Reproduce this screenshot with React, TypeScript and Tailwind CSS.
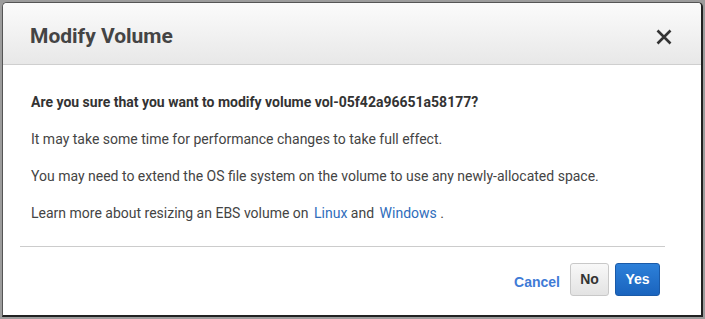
export default function App() {
  return (
    <div className="w-[705px] h-[319px] bg-[#9c9c9c] pt-[2px] pl-[2px]">
      <div className="w-[701px] h-[315px] bg-white rounded-t-[5px] border-l border-t border-[#555] border-r-2 border-b-2 border-r-[#222] border-b-[#222] flex flex-col overflow-hidden">
        <div className="h-[62px] shrink-0 bg-gradient-to-b from-[#fbfbfb] to-[#e8e8e8] border-b border-[#cfcfcf] flex items-center justify-between pl-[27px] pr-[29px]">
          <div className="text-[21px] font-bold text-[#444] pt-[6px]" style={{ fontFamily: "Roboto, sans-serif" }}>Modify Volume</div>
          <svg width="16" height="16" viewBox="0 0 16 16" className="mt-[7px]">
            <path d="M1.5 1.5 L14.5 14.5 M14.5 1.5 L1.5 14.5" stroke="#333" strokeWidth="2.6" strokeLinecap="butt" />
          </svg>
        </div>
        <div className="px-[28px] pt-[27px] text-[14px] text-[#444] leading-[20px]" style={{ fontFamily: "Roboto, sans-serif" }}>
          <p className="font-bold text-[#333]">Are you sure that you want to modify volume vol-05f42a96651a58177?</p>
          <p className="mt-[17px]">It may take some time for performance changes to take full effect.</p>
          <p className="mt-[17px]">You may need to extend the OS file system on the volume to use any newly-allocated space.</p>
          <p className="mt-[17px]">Learn more about resizing an EBS volume on <span className="text-[#2f6dbb] ml-[2px]">Linux</span> and <span className="text-[#2f6dbb] ml-[2px]">Windows</span> .</p>
        </div>
        <div className="ml-[17px] mr-[36px] mt-[23px] border-t border-[#cccccc]" />
        <div className="flex justify-end items-center pr-[41px] pt-[16px] gap-[6px]" style={{ fontFamily: "Arial, 'Liberation Sans', sans-serif" }}>
          <span className="text-[14px] font-bold text-[#3f7bd6] mr-[4px] mt-[6px]">Cancel</span>
          <button className="h-[33px] w-[39px] rounded-[3px] border border-[#c8c8c8] bg-gradient-to-b from-[#f8f8f8] to-[#e3e3e3] text-[14px] font-bold text-[#333]">No</button>
          <button className="h-[33px] w-[45px] rounded-[3px] border border-[#1a5aa8] bg-gradient-to-b from-[#2d80d9] to-[#1a64be] text-[14px] font-bold text-white">Yes</button>
        </div>
      </div>
    </div>
  );
}
